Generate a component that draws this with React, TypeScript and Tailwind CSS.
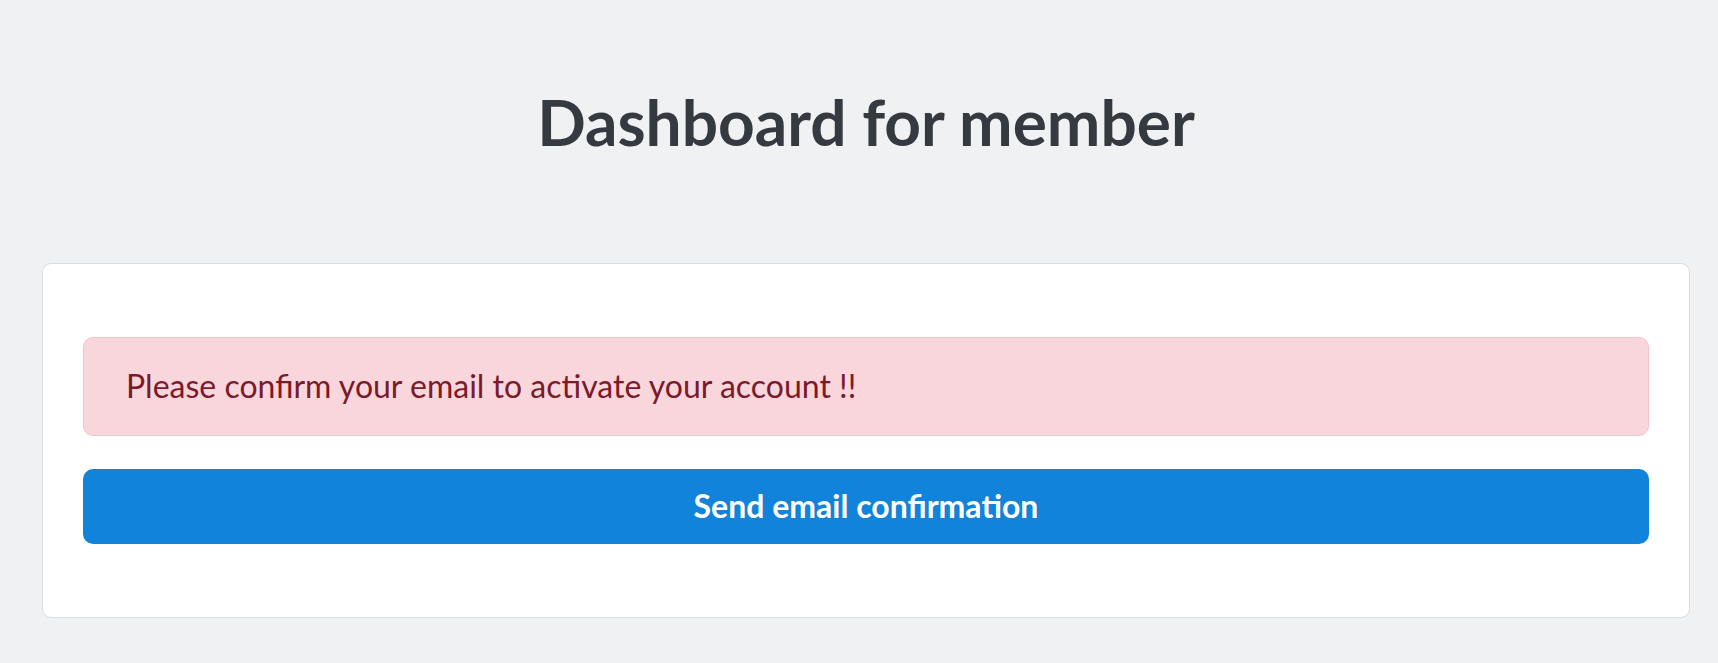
import React from 'react';

const App = () => {
  return (
    <div className="min-h-screen w-full bg-[#f0f1f3] pt-[84px] pb-[45px]" style={{ fontFamily: 'Lato, "Open Sans", sans-serif' }}>
      <div className="ml-[42px] mr-[28px]">
        <h1 className="text-center text-[64px] leading-[1.2] font-bold text-[#343a40]">
          Dashboard for member
        </h1>

        <div className="mt-[102px] bg-white border border-[#dcdcdc] rounded-[9px] px-[40px] py-[73px] flex flex-col gap-[33px]">
          <div className="h-[99px] flex items-center px-[42px] bg-[#f9d5dc] border border-[#f5c2ca] rounded-[10px] text-[#7a1a2a] text-[32px] leading-[1.5]">
            Please confirm your email to activate your account !!
          </div>
          <button className="h-[75px] w-full rounded-[10px] bg-[#1283da] text-white text-[32px] font-bold">
            Send email confirmation
          </button>
        </div>
      </div>
    </div>
  );
};

export default App;
